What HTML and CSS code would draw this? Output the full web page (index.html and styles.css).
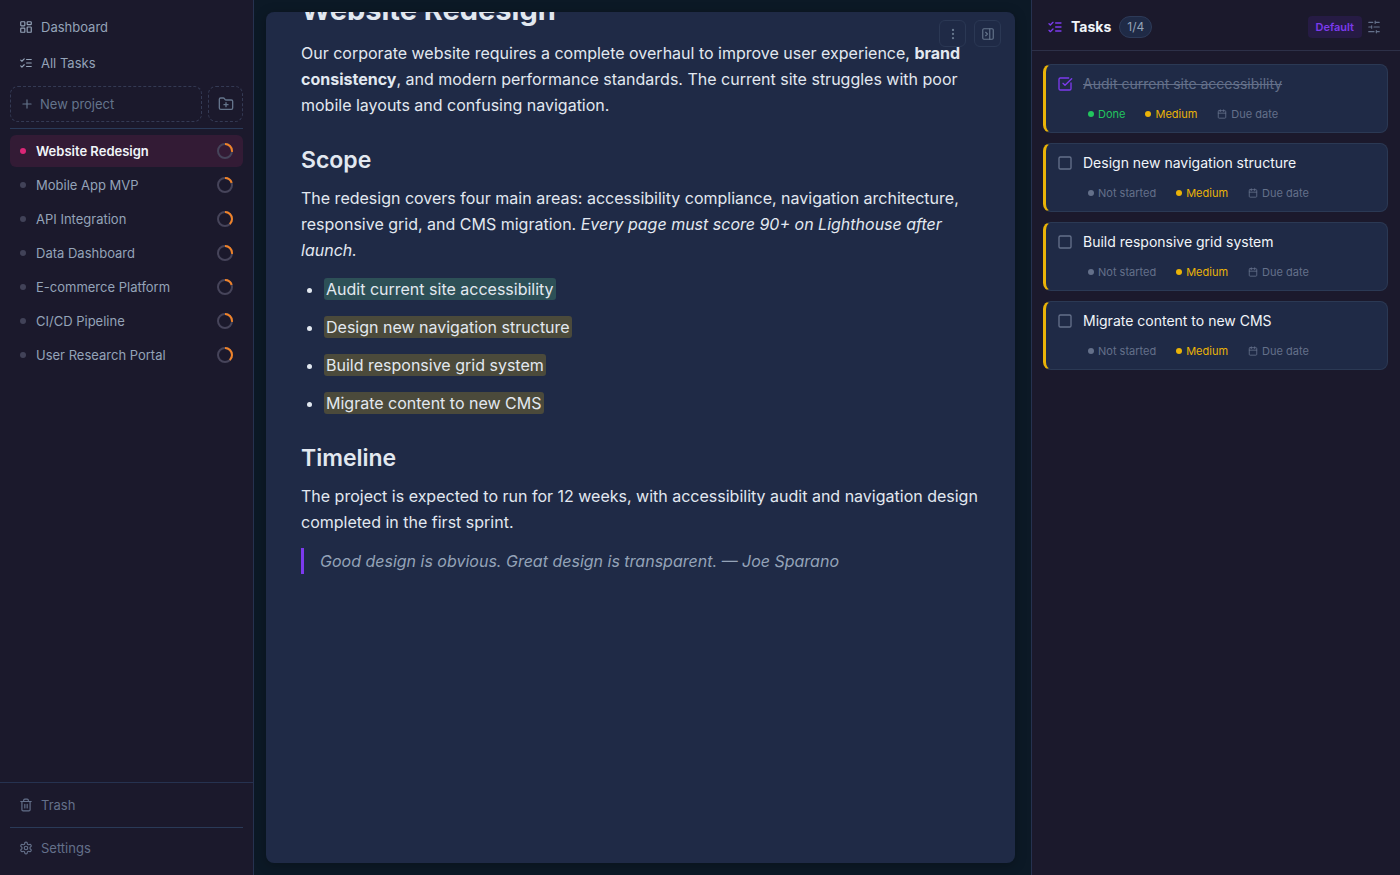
FILE: index.html
```html
<!DOCTYPE html>
<html lang="en">
  <head>
    <meta charset="utf-8" />
    <title>Website Redesign</title>
    <link rel="stylesheet" href="styles.css" />
  </head>
  <body>
    <!-- shared icons -->
    <svg class="sprite" aria-hidden="true">
      <symbol id="list-checks" viewBox="0 0 24 24">
        <path d="m3 17 2 2 4-4M3 7l2 2 4-4M13 6h8M13 12h8M13 18h8" />
      </symbol>
      <symbol id="calendar" viewBox="0 0 24 24">
        <path d="M8 2v4M16 2v4M3 10h18" />
        <rect width="18" height="18" x="3" y="4" rx="2" />
      </symbol>
    </svg>

    <div class="app">
      <aside class="sidebar">
        <nav class="main-nav">
          <a class="nav-link" href="#">
            <svg class="icon" viewBox="0 0 24 24">
              <rect width="7" height="7" x="3" y="3" rx="1" />
              <rect width="7" height="5" x="14" y="3" rx="1" />
              <rect width="7" height="9" x="14" y="12" rx="1" />
              <rect width="7" height="7" x="3" y="14" rx="1" />
            </svg>
            Dashboard
          </a>
          <a class="nav-link" href="#">
            <svg class="icon"><use href="#list-checks" /></svg>
            All Tasks
          </a>
        </nav>

        <div class="new-row">
          <button class="new-button new-project">
            <svg class="icon" viewBox="0 0 24 24"><path d="M5 12h14M12 5v14" /></svg>
            New project
          </button>
          <button class="new-button new-folder" aria-label="New folder">
            <svg class="icon" viewBox="0 0 24 24">
              <path d="M12 10v6M9 13h6M20 20a2 2 0 0 0 2-2V8a2 2 0 0 0-2-2h-7.9a2 2 0 0 1-1.69-.9L9.6 3.9A2 2 0 0 0 7.93 3H4a2 2 0 0 0-2 2v13a2 2 0 0 0 2 2Z" />
            </svg>
          </button>
        </div>

        <nav class="projects">
          <a class="project active" href="#">
            <span class="project-dot"></span>
            <span class="project-name">Website Redesign</span>
            <svg class="ring" viewBox="0 0 16 16"><circle cx="8" cy="8" r="7" /><circle class="ring-value" cx="8" cy="8" r="7" pathLength="100" stroke-dasharray="27 100" /></svg>
          </a>
          <a class="project" href="#">
            <span class="project-dot"></span>
            <span class="project-name">Mobile App MVP</span>
            <svg class="ring" viewBox="0 0 16 16"><circle cx="8" cy="8" r="7" /><circle class="ring-value" cx="8" cy="8" r="7" pathLength="100" stroke-dasharray="20 100" /></svg>
          </a>
          <a class="project" href="#">
            <span class="project-dot"></span>
            <span class="project-name">API Integration</span>
            <svg class="ring" viewBox="0 0 16 16"><circle cx="8" cy="8" r="7" /><circle class="ring-value" cx="8" cy="8" r="7" pathLength="100" stroke-dasharray="38 100" /></svg>
          </a>
          <a class="project" href="#">
            <span class="project-dot"></span>
            <span class="project-name">Data Dashboard</span>
            <svg class="ring" viewBox="0 0 16 16"><circle cx="8" cy="8" r="7" /><circle class="ring-value" cx="8" cy="8" r="7" pathLength="100" stroke-dasharray="27 100" /></svg>
          </a>
          <a class="project" href="#">
            <span class="project-dot"></span>
            <span class="project-name">E-commerce Platform</span>
            <svg class="ring" viewBox="0 0 16 16"><circle cx="8" cy="8" r="7" /><circle class="ring-value" cx="8" cy="8" r="7" pathLength="100" stroke-dasharray="20 100" /></svg>
          </a>
          <a class="project" href="#">
            <span class="project-dot"></span>
            <span class="project-name">CI/CD Pipeline</span>
            <svg class="ring" viewBox="0 0 16 16"><circle cx="8" cy="8" r="7" /><circle class="ring-value" cx="8" cy="8" r="7" pathLength="100" stroke-dasharray="27 100" /></svg>
          </a>
          <a class="project" href="#">
            <span class="project-dot"></span>
            <span class="project-name">User Research Portal</span>
            <svg class="ring" viewBox="0 0 16 16"><circle cx="8" cy="8" r="7" /><circle class="ring-value" cx="8" cy="8" r="7" pathLength="100" stroke-dasharray="38 100" /></svg>
          </a>
        </nav>

        <div class="sidebar-footer">
          <a class="nav-link" href="#">
            <svg class="icon" viewBox="0 0 24 24">
              <path d="M3 6h18M19 6v14a2 2 0 0 1-2 2H7a2 2 0 0 1-2-2V6M8 6V4a2 2 0 0 1 2-2h4a2 2 0 0 1 2 2v2M10 11v6M14 11v6" />
            </svg>
            Trash
          </a>
          <a class="nav-link" href="#">
            <svg class="icon" viewBox="0 0 24 24">
              <path d="M12.22 2h-.44a2 2 0 0 0-2 2v.18a2 2 0 0 1-1 1.73l-.43.25a2 2 0 0 1-2 0l-.15-.08a2 2 0 0 0-2.73.73l-.22.38a2 2 0 0 0 .73 2.73l.15.1a2 2 0 0 1 1 1.72v.51a2 2 0 0 1-1 1.74l-.15.09a2 2 0 0 0-.73 2.73l.22.38a2 2 0 0 0 2.73.73l.15-.08a2 2 0 0 1 2 0l.43.25a2 2 0 0 1 1 1.73V20a2 2 0 0 0 2 2h.44a2 2 0 0 0 2-2v-.18a2 2 0 0 1 1-1.73l.43-.25a2 2 0 0 1 2 0l.15.08a2 2 0 0 0 2.73-.73l.22-.39a2 2 0 0 0-.73-2.73l-.15-.08a2 2 0 0 1-1-1.74v-.5a2 2 0 0 1 1-1.74l.15-.09a2 2 0 0 0 .73-2.73l-.22-.38a2 2 0 0 0-2.73-.73l-.15.08a2 2 0 0 1-2 0l-.43-.25a2 2 0 0 1-1-1.73V4a2 2 0 0 0-2-2z" />
              <circle cx="12" cy="12" r="3" />
            </svg>
            Settings
          </a>
        </div>
      </aside>

      <main class="editor">
        <div class="page">
          <div class="page-actions">
            <button class="icon-button" aria-label="More">
              <svg class="icon" viewBox="0 0 24 24"><circle cx="12" cy="5" r="1" /><circle cx="12" cy="12" r="1" /><circle cx="12" cy="19" r="1" /></svg>
            </button>
            <button class="icon-button" aria-label="Close panel">
              <svg class="icon" viewBox="0 0 24 24"><rect width="18" height="18" x="3" y="3" rx="2" /><path d="M15 3v18M8 9l3 3-3 3" /></svg>
            </button>
          </div>

          <article class="document">
            <h1>Website Redesign</h1>
            <p>
              Our corporate website requires a complete overhaul to improve user experience,
              <strong>brand consistency</strong>, and modern performance standards. The current site
              struggles with poor mobile layouts and confusing navigation.
            </p>
            <h2>Scope</h2>
            <p>
              The redesign covers four main areas: accessibility compliance, navigation architecture,
              responsive grid, and CMS migration.
              <em>Every page must score 90+ on Lighthouse after launch.</em>
            </p>
            <ul>
              <li><mark class="done">Audit current site accessibility</mark></li>
              <li><mark>Design new navigation structure</mark></li>
              <li><mark>Build responsive grid system</mark></li>
              <li><mark>Migrate content to new CMS</mark></li>
            </ul>
            <h2>Timeline</h2>
            <p>
              The project is expected to run for 12 weeks, with accessibility audit and navigation
              design completed in the first sprint.
            </p>
            <blockquote>Good design is obvious. Great design is transparent. — Joe Sparano</blockquote>
          </article>
        </div>
      </main>

      <aside class="tasks">
        <header class="tasks-header">
          <svg class="icon tasks-icon"><use href="#list-checks" /></svg>
          <h2>Tasks</h2>
          <span class="count">1/4</span>
          <button class="view-button">Default</button>
          <button class="filter-button" aria-label="Filters">
            <svg class="icon" viewBox="0 0 24 24">
              <path d="M21 4h-7M10 4H3M21 12h-9M8 12H3M21 20h-5M12 20H3M14 2v4M8 10v4M16 18v4" />
            </svg>
          </button>
        </header>

        <ul class="task-list">
          <li class="task completed">
            <div class="task-title">
              <span class="check">
                <input type="checkbox" id="task-1" checked />
                <svg class="icon" viewBox="0 0 24 24"><path d="M21 10.5V19a2 2 0 0 1-2 2H5a2 2 0 0 1-2-2V5a2 2 0 0 1 2-2h12.5M9 11l3 3L22 4" /></svg>
              </span>
              <label for="task-1">Audit current site accessibility</label>
            </div>
            <div class="task-meta">
              <button class="chip status-done"><span class="chip-dot"></span>Done</button>
              <button class="chip medium"><span class="chip-dot"></span>Medium</button>
              <button class="chip"><svg class="icon"><use href="#calendar" /></svg>Due date</button>
            </div>
          </li>
          <li class="task">
            <div class="task-title">
              <span class="check">
                <input type="checkbox" id="task-2" />
                <svg class="icon" viewBox="0 0 24 24"><rect width="18" height="18" x="3" y="3" rx="2" /></svg>
              </span>
              <label for="task-2">Design new navigation structure</label>
            </div>
            <div class="task-meta">
              <button class="chip"><span class="chip-dot"></span>Not started</button>
              <button class="chip medium"><span class="chip-dot"></span>Medium</button>
              <button class="chip"><svg class="icon"><use href="#calendar" /></svg>Due date</button>
            </div>
          </li>
          <li class="task">
            <div class="task-title">
              <span class="check">
                <input type="checkbox" id="task-3" />
                <svg class="icon" viewBox="0 0 24 24"><rect width="18" height="18" x="3" y="3" rx="2" /></svg>
              </span>
              <label for="task-3">Build responsive grid system</label>
            </div>
            <div class="task-meta">
              <button class="chip"><span class="chip-dot"></span>Not started</button>
              <button class="chip medium"><span class="chip-dot"></span>Medium</button>
              <button class="chip"><svg class="icon"><use href="#calendar" /></svg>Due date</button>
            </div>
          </li>
          <li class="task">
            <div class="task-title">
              <span class="check">
                <input type="checkbox" id="task-4" />
                <svg class="icon" viewBox="0 0 24 24"><rect width="18" height="18" x="3" y="3" rx="2" /></svg>
              </span>
              <label for="task-4">Migrate content to new CMS</label>
            </div>
            <div class="task-meta">
              <button class="chip"><span class="chip-dot"></span>Not started</button>
              <button class="chip medium"><span class="chip-dot"></span>Medium</button>
              <button class="chip"><svg class="icon"><use href="#calendar" /></svg>Due date</button>
            </div>
          </li>
        </ul>
      </aside>
    </div>
  </body>
</html>
```
FILE: styles.css
```css
* {
  box-sizing: border-box;
}

body {
  margin: 0;
  font-family: Inter, "Liberation Sans", sans-serif;
  background-color: #0c1926;
  color: #e2e8f0;
}

button {
  padding: 0;
  border: none;
  background: none;
  font-family: inherit;
  cursor: pointer;
}

a {
  color: inherit;
  text-decoration: none;
}

ul {
  margin: 0;
  padding: 0;
}

.sprite {
  display: none;
}

.icon {
  flex: none;
  width: 14px;
  height: 14px;
  fill: none;
  stroke: currentColor;
  stroke-width: 2;
  stroke-linecap: round;
  stroke-linejoin: round;
}

.app {
  display: grid;
  grid-template-columns: 254px 1fr 369px;
  height: 100vh;
}

/* sidebar */

.sidebar {
  display: flex;
  flex-direction: column;
  background-color: #1b192c;
  border-right: 1px solid #263250;
}

.main-nav {
  display: flex;
  flex-direction: column;
  gap: 4px;
  padding: 11px 10px 7px;
  color: #94a3b8;
}

.nav-link {
  display: flex;
  align-items: center;
  gap: 8px;
  height: 32px;
  padding: 0 9px;
  font-size: 13px;
}

.new-row {
  display: flex;
  gap: 6px;
  margin: 0 10px;
  padding-bottom: 6px;
  border-bottom: 1px solid #2a3a58;
}

.new-button {
  display: flex;
  align-items: center;
  height: 36px;
  border: 1px dashed #343a54;
  border-radius: 8px;
  color: #64748b;
  font-size: 13px;
}

.new-project {
  flex: 1;
  gap: 6px;
  padding: 0 9px;
}

.new-folder {
  justify-content: center;
  width: 35px;
}

.new-folder .icon {
  width: 16px;
  height: 16px;
}

.projects {
  display: flex;
  flex: 1;
  flex-direction: column;
  gap: 2px;
  padding: 6px 10px;
}

.project {
  display: flex;
  align-items: center;
  gap: 10px;
  height: 32px;
  padding: 0 10px;
  border-radius: 6px;
  color: #94a3b8;
  font-size: 13px;
}

.project.active {
  background-color: #331b35;
  color: #f1f5f9;
  font-weight: 600;
}

.project-dot {
  width: 6px;
  height: 6px;
  border-radius: 50%;
  background-color: #414258;
}

.active .project-dot {
  background-color: #db2777;
}

.project-name {
  flex: 1;
}

.ring {
  width: 16px;
  height: 16px;
  fill: none;
  stroke: #46445a;
  stroke-width: 2;
  overflow: visible;
  transform: rotate(-90deg);
}

.ring-value {
  stroke: #f08228;
}

.sidebar-footer {
  padding: 6px 10px 10px;
  border-top: 1px solid #263250;
  color: #64708a;
}

.sidebar-footer .nav-link + .nav-link {
  height: 38px;
  margin-top: 6px;
  padding-top: 3px;
  border-top: 1px solid #2a3a58;
}

/* editor */

.editor {
  min-width: 0;
  padding: 12px 16px 12px 12px;
}

.page {
  position: relative;
  height: 100%;
  overflow: hidden;
  border-radius: 8px;
  background-color: #1f2a46;
  box-shadow: 0 2px 12px rgba(0, 0, 0, 0.25);
}

.page-actions {
  position: absolute;
  top: 8px;
  right: 14px;
  display: flex;
  gap: 8px;
}

.icon-button {
  display: flex;
  align-items: center;
  justify-content: center;
  width: 27px;
  height: 27px;
  border: 1px solid #2b3854;
  border-radius: 6px;
  color: #64748b;
}

/* scrolled down past the top of the title */
.document {
  margin-top: -28px;
  padding: 8px 35px;
  font-size: 16px;
  line-height: 26px;
}

.document h1 {
  margin: 0 0 12px;
  font-size: 29px;
  line-height: 36px;
}

.document h2 {
  margin: 26px 0 9px;
  font-size: 23px;
  line-height: 32px;
  font-weight: 600;
}

.document p {
  margin: 0 0 13px;
}

.document ul {
  padding-left: 23px;
}

.document li {
  margin-bottom: 12px;
}

.document mark {
  padding: 1px 2px;
  border-radius: 3px;
  background-color: #4b4a3b;
  color: inherit;
}

.document mark.done {
  background-color: #2d5057;
}

.document blockquote {
  margin: 0;
  padding-left: 16px;
  border-left: 3px solid #7c3aed;
  color: #94a3b8;
  font-style: italic;
}

/* tasks */

.tasks {
  background-color: #1b192c;
  border-left: 1px solid #263250;
}

.tasks-header {
  display: flex;
  align-items: center;
  height: 51px;
  padding: 3px 19px 0 15px;
  border-bottom: 1px solid #2d3048;
}

.tasks-icon {
  width: 16px;
  height: 16px;
  color: #7c3aed;
}

.tasks-header h2 {
  margin: 0 8px;
  color: #f1f5f9;
  font-size: 14px;
  font-weight: 700;
}

.count {
  padding: 2px 7px;
  border: 1px solid #2d3a58;
  border-radius: 11px;
  background-color: #1f2a46;
  color: #94a3b8;
  font-size: 12px;
  line-height: 16px;
}

.view-button {
  margin-left: auto;
  padding: 3px 8px;
  border-radius: 4px;
  background-color: #261b44;
  color: #7c3aed;
  font-size: 11px;
  font-weight: 600;
  line-height: 16px;
}

.filter-button {
  display: flex;
  margin-left: 5px;
  color: #64708a;
}

.task-list {
  display: flex;
  flex-direction: column;
  gap: 10px;
  padding: 13px 12px 12px 11px;
  list-style: none;
}

.task {
  padding: 10px 11px;
  border: 1px solid #2b3954;
  border-left: 3px solid #eab308;
  border-radius: 8px;
  background-color: #1f2a46;
}

.task-title {
  display: flex;
  align-items: center;
  gap: 10px;
  color: #f1f5f9;
  font-size: 14px;
  line-height: 18px;
}

.completed .task-title {
  color: #64708a;
  text-decoration: line-through;
}

.check {
  display: grid;
  color: #64708a;
}

.completed .check {
  color: #7c3aed;
}

.check input,
.check .icon {
  grid-area: 1 / 1;
  width: 16px;
  height: 16px;
  margin: 0;
}

.check input {
  appearance: none;
}

.check .icon {
  pointer-events: none;
}

.task-meta {
  display: flex;
  gap: 20px;
  margin-top: 13px;
  padding-left: 31px;
}

.chip {
  display: flex;
  align-items: center;
  gap: 4px;
  color: #64708a;
  font-size: 11px;
  line-height: 16px;
}

.chip .icon {
  width: 10px;
  height: 10px;
}

.chip-dot {
  width: 6px;
  height: 6px;
  border-radius: 50%;
  background-color: currentColor;
}

.status-done {
  color: #22c55e;
}

.medium {
  color: #eab308;
}
```
